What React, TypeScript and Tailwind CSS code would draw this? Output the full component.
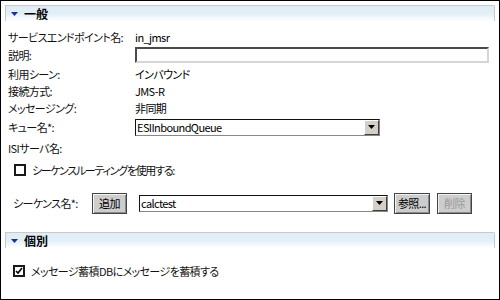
import React from 'react'

const font = "[font-family:'Noto_Sans_CJK_JP',sans-serif] [font-feature-settings:'palt']"
const txt = 'text-[11px] leading-none tracking-[-0.6px] whitespace-nowrap'

function SectionHeader({ title }: { title: string }) {
  return (
    <div className="mx-[4px] h-[16px] flex items-center border-t border-l border-r border-[#c9c9c9] rounded-tr-[2px] bg-gradient-to-b from-[#deedf7] via-[#e3eff7] to-white">
      <svg width="7" height="4" viewBox="0 0 7 4" className="ml-[5px] mr-[6px]">
        <polygon points="0,0 7,0 3.5,4" fill="#1c2f8c" />
      </svg>
      <span className="text-[12px] font-bold text-black leading-none">{title}</span>
    </div>
  )
}

function Row({ label, h, children }: { label: string; h: string; children?: React.ReactNode }) {
  return (
    <div className={`flex items-center pl-[7px] ${h}`}>
      <div className={`w-[127px] shrink-0 text-[#111] ${txt}`}>{label}</div>
      {children}
    </div>
  )
}

function Combo({ value, w }: { value: string; w: string }) {
  return (
    <div className={`flex h-[17px] ${w} border border-t-[#111] border-l-[#111] border-b-[#888] border-r-[#888] bg-white`}>
      <div className={`flex-1 flex items-center pl-[1px] text-black ${txt}`}>{value}</div>
      <div className="w-[15px] bg-[#d4d0c8] flex items-center justify-center border border-t-white border-l-white border-b-[#404040] border-r-[#404040]">
        <svg width="7" height="4" viewBox="0 0 7 4">
          <polygon points="0,0 7,0 3.5,4" fill="#000" />
        </svg>
      </div>
    </div>
  )
}

function Button({ label, w, disabled }: { label: string; w: string; disabled?: boolean }) {
  return (
    <div
      className={`h-[21px] ${w} flex items-center justify-center bg-[#cdcdcd] border border-[#444] shadow-[inset_1px_1px_0_#f2f2f2,inset_-1px_-1px_0_#8a8a8a] ${txt} ${
        disabled ? 'text-[#9a9a9a]' : 'text-black'
      }`}
    >
      {label}
    </div>
  )
}

function Checkbox({ checked }: { checked?: boolean }) {
  return (
    <div className="w-[12px] h-[12px] border-2 border-[#1a1a1a] bg-white flex items-center justify-center">
      {checked && (
        <svg width="8" height="8" viewBox="0 0 8 8">
          <polyline points="1,4 3,6 7,1" fill="none" stroke="#000" strokeWidth="1.6" />
        </svg>
      )}
    </div>
  )
}

export default function App() {
  return (
    <div className={`w-[500px] h-[300px] border border-black bg-white overflow-hidden ${font}`}>
      <div className="h-[4px]" />
      <SectionHeader title="一般" />

      <div className="mt-[8px]">
        <Row label="サービスエンドポイント名:" h="h-[16px]">
          <span className={`text-black ${txt}`}>in_jmsr</span>
        </Row>
        <Row label="説明:" h="h-[20px]">
          <div className="w-[354px] h-[16px] bg-white border-2 border-t-[#4a4a4a] border-l-[#4a4a4a] border-b-[#d6d6d6] border-r-[#d6d6d6]" />
        </Row>
        <Row label="利用シーン:" h="h-[18px]">
          <span className={`text-black ${txt}`}>インバウンド</span>
        </Row>
        <Row label="接続方式:" h="h-[16px]">
          <span className={`text-black ${txt}`}>JMS-R</span>
        </Row>
        <Row label="メッセージング:" h="h-[18px]">
          <span className={`text-black ${txt}`}>非同期</span>
        </Row>
        <Row label="キュー名*:" h="h-[20px]">
          <Combo value="ESIInboundQueue" w="w-[245px]" />
        </Row>
        <Row label="ISIサーバ名:" h="h-[22px]" />

        <div className="h-[22px] flex items-center pl-[13px] gap-[6px]">
          <Checkbox />
          <span className="text-[#111] text-[11px] leading-none tracking-[-1.3px] whitespace-nowrap">
            シーケンスルーティングを使用する:
          </span>
        </div>

        <div className="mt-[11px] h-[22px] flex items-center pl-[12px]">
          <span className={`w-[79px] text-[#111] ${txt}`}>シーケンス名*:</span>
          <Button label="追加" w="w-[35px]" />
          <div className="ml-[12px]">
            <Combo value="calctest" w="w-[249px]" />
          </div>
          <div className="ml-[6px]">
            <Button label="参照..." w="w-[36px]" />
          </div>
          <div className="ml-[7px]">
            <Button label="削除" w="w-[35px]" disabled />
          </div>
        </div>
      </div>

      <div className="mt-[18px]">
        <SectionHeader title="個別" />
      </div>

      <div className="mt-[14px] h-[18px] flex items-center pl-[12px] gap-[6px]">
        <Checkbox checked />
        <span className={`text-[#111] ${txt}`}>メッセージ蓄積DBにメッセージを蓄積する</span>
      </div>
    </div>
  )
}
